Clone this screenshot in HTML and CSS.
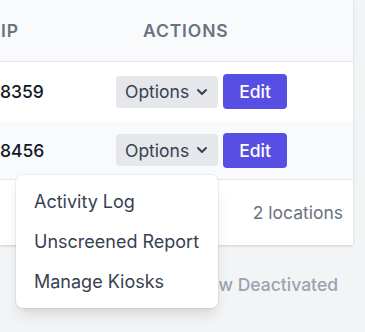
FILE: index.html
```html
<!DOCTYPE html>
<html lang="en">
<head>
    <meta charset="UTF-8">
    <meta name="viewport" content="width=device-width, initial-scale=1.0">
    <title>Kiosks</title>
    <link rel="stylesheet" href="styles.css">
</head>
<body>
    <div class="card">
        <div class="row head">
            <div class="col-ip">IP</div>
            <div class="col-actions head-actions">Actions</div>
        </div>
        <div class="row">
            <div class="col-ip">8359</div>
            <div class="col-actions">
                <div class="dropdown">
                    <button class="options">Options
                        <svg class="chevron" viewBox="0 0 20 20" fill="currentColor"><path fill-rule="evenodd" d="M5.293 7.293a1 1 0 011.414 0L10 10.586l3.293-3.293a1 1 0 111.414 1.414l-4 4a1 1 0 01-1.414 0l-4-4a1 1 0 010-1.414z" clip-rule="evenodd"/></svg>
                    </button>
                </div>
                <button class="edit">Edit</button>
            </div>
        </div>
        <div class="row striped">
            <div class="col-ip">8456</div>
            <div class="col-actions">
                <div class="dropdown">
                    <button class="options">Options
                        <svg class="chevron" viewBox="0 0 20 20" fill="currentColor"><path fill-rule="evenodd" d="M5.293 7.293a1 1 0 011.414 0L10 10.586l3.293-3.293a1 1 0 111.414 1.414l-4 4a1 1 0 01-1.414 0l-4-4a1 1 0 010-1.414z" clip-rule="evenodd"/></svg>
                    </button>
                    <div class="menu">
                        <a class="menu-item">Activity Log</a>
                        <a class="menu-item">Unscreened Report</a>
                        <a class="menu-item">Manage Kiosks</a>
                    </div>
                </div>
                <button class="edit">Edit</button>
            </div>
        </div>
        <div class="foot">2 locations</div>
    </div>
    <div class="below">
        <a class="show-deactivated">Show Deactivated</a>
    </div>
</body>
</html>
```

FILE: styles.css
```css
body {
    margin: 0;
    min-height: 100vh;
    background-color: #f3f4f6;
    font-family: Inter, "Noto Sans", sans-serif;
    font-size: 17.5px;
    color: #111827;
}
.card {
    width: 353px;
    background-color: #fff;
    box-shadow: 0 1px 3px rgba(0, 0, 0, 0.1), 0 1px 2px rgba(0, 0, 0, 0.06);
}
.row {
    display: flex;
    align-items: center;
    height: 59px;
}
.row.head {
    height: 61px;
    background-color: #f9fafb;
    border-bottom: 1px solid #e5e7eb;
}
.row.striped {
    height: 58px;
    background-color: #f9fafb;
    border-bottom: 1px solid #e5e7eb;
}
.col-ip {
    width: 116px;
    font-weight: 500;
}
.head .col-ip {
    padding-left: 1px;
    font-weight: 600;
}
.head-actions {
    padding-left: 26px;
}
.head {
    color: #6b7280;
    font-weight: 600;
    text-transform: uppercase;
    letter-spacing: 0.05em;
}
.col-actions {
    display: flex;
    align-items: center;
    gap: 5px;
}
.dropdown {
    position: relative;
}
button {
    font-family: inherit;
    font-size: inherit;
    border: none;
    cursor: pointer;
}
.options {
    display: flex;
    align-items: center;
    height: 32px;
    width: 102px;
    padding: 0 6px 0 9px;
    background-color: #e5e7eb;
    color: #374151;
    border-radius: 4px;
}
.chevron {
    width: 20px;
    height: 20px;
    margin-left: auto;
}
.edit {
    height: 35px;
    width: 64px;
    padding: 0;
    background-color: #574fe3;
    color: #fff;
    font-weight: 500;
    border-radius: 4px;
}
.menu {
    position: absolute;
    right: 0;
    top: 41px;
    width: 202px;
    padding: 7px 0 6px;
    background-color: #fff;
    border-radius: 7px;
    box-shadow: 0 0 0 1px rgba(0, 0, 0, 0.05), 0 10px 15px -3px rgba(0, 0, 0, 0.1), 0 4px 6px -2px rgba(0, 0, 0, 0.05);
    z-index: 10;
}
.menu-item {
    display: block;
    height: 40px;
    line-height: 40px;
    padding-left: 18px;
    font-size: 18px;
    color: #374151;
}
.foot {
    height: 65px;
    display: flex;
    align-items: center;
    justify-content: flex-end;
    padding-right: 10px;
    color: #6b7280;
}
.below {
    width: 353px;
    display: flex;
    justify-content: flex-end;
    padding-top: 29px;
}
.show-deactivated {
    padding-right: 15px;
    color: #9ca3af;
    font-weight: 500;
}
```
